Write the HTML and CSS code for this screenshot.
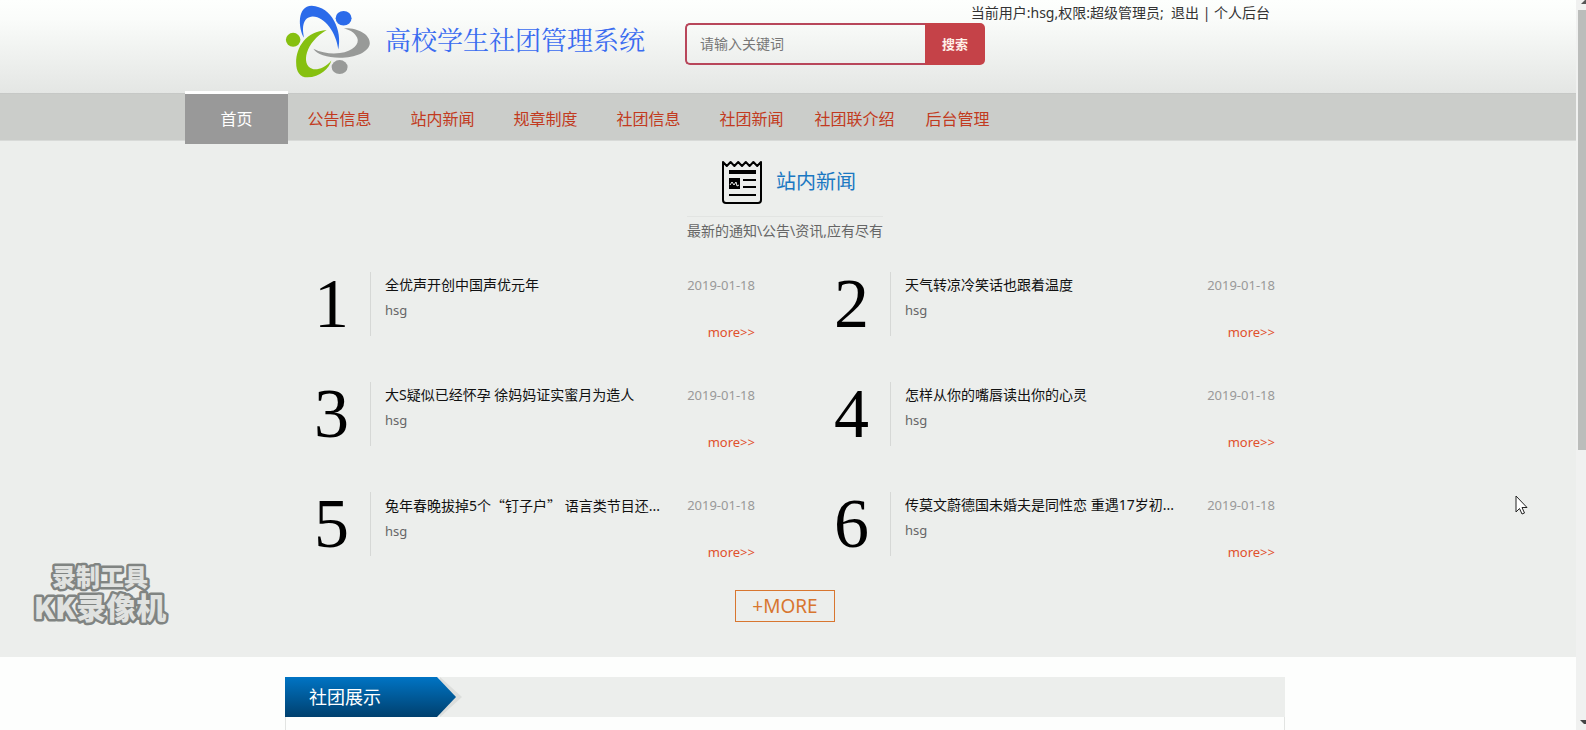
FILE: index.html
```html
<!DOCTYPE html>
<html lang="zh-CN">
<head>
<meta charset="utf-8">
<title>高校学生社团管理系统</title>
<link rel="stylesheet" href="styles.css">
</head>
<body>
<div class="page">
  <header class="header">
    <div class="wrap header-row">
      <svg class="logo" viewBox="45 10 258 226" aria-hidden="true">
        <path fill="#2b6bea" d="M102 112C84 84 80 15 125 15C186 18 218 90 205 147C200 100 165 48 128 48C98 50 95 80 102 112Z"/>
        <ellipse fill="#2b6bea" cx="221" cy="53" rx="24" ry="22"/>
        <path fill="#86c010" d="M170 88C108 92 78 140 78 186C78 215 90 231 112 231C150 230 178 204 184 180C165 203 140 210 126 205C92 192 105 125 170 88Z"/>
        <ellipse fill="#86c010" cx="69" cy="118" rx="22" ry="21"/>
        <path fill="#989a98" d="M222 83C262 81 300 100 300 128C298 155 255 172 210 172C170 171 140 162 130 145C155 158 185 161 210 158C250 153 270 130 262 112C255 95 238 88 222 83Z"/>
        <ellipse fill="#989a98" cx="209" cy="200" rx="24" ry="21"/>
      </svg>
      <h1 class="site-name">高校学生社团管理系统</h1>
      <form class="search">
        <input class="search-input" type="text" aria-label="关键词" placeholder="请输入关键词">
        <button class="search-button" type="button">搜索</button>
      </form>
      <p class="user">当前用户:hsg,权限:超级管理员;&nbsp; <a href="#">退出</a> | <a href="#">个人后台</a></p>
    </div>
  </header>
  <nav class="nav">
    <div class="nav-row">
      <a class="nav-item nav-active" href="#">首页</a>
      <a class="nav-item" href="#">公告信息</a>
      <a class="nav-item" href="#">站内新闻</a>
      <a class="nav-item" href="#">规章制度</a>
      <a class="nav-item" href="#">社团信息</a>
      <a class="nav-item" href="#">社团新闻</a>
      <a class="nav-item" href="#">社团联介绍</a>
      <a class="nav-item" href="#">后台管理</a>
    </div>
  </nav>
  <main class="main">
    <section class="news">
      <div class="news-head">
        <div class="news-title">
          <svg class="news-icon" viewBox="0 0 40 44" aria-hidden="true">
            <path fill="none" stroke="#000" stroke-width="2" stroke-linejoin="round" d="M1 2V40Q1 43 4 43H36Q39 43 39 40V2L35.200 6L31.400 2L27.600 6L23.800 2L20 6L16.200 2L12.400 6L8.600 2L4.800 6Z"/>
            <path fill="#000" d="M7 10H34V14H7ZM7 18H18V29H7Z"/>
            <path fill="none" stroke="#000" stroke-width="2" d="M21 20H34M21 27H34M7 35H34"/>
            <path fill="none" stroke="#eceeec" stroke-width="1" d="M8 25L10 22L12 25L14 22L15 26L17 25"/>
          </svg>
          <h2 class="news-name">站内新闻</h2>
        </div>
        <p class="news-sub">最新的通知\公告\资讯,应有尽有</p>
      </div>
      <div class="wrap news-grid">
        <article class="item"><span class="num">1</span><div class="text"><h3 class="title">全优声开创中国声优元年</h3><p class="author">hsg</p></div><div class="side"><time class="date">2019-01-18</time><a class="more" href="#">more&gt;&gt;</a></div></article>
        <article class="item"><span class="num">2</span><div class="text"><h3 class="title">天气转凉冷笑话也跟着温度</h3><p class="author">hsg</p></div><div class="side"><time class="date">2019-01-18</time><a class="more" href="#">more&gt;&gt;</a></div></article>
        <article class="item"><span class="num">3</span><div class="text"><h3 class="title">大S疑似已经怀孕 徐妈妈证实蜜月为造人</h3><p class="author">hsg</p></div><div class="side"><time class="date">2019-01-18</time><a class="more" href="#">more&gt;&gt;</a></div></article>
        <article class="item"><span class="num">4</span><div class="text"><h3 class="title">怎样从你的嘴唇读出你的心灵</h3><p class="author">hsg</p></div><div class="side"><time class="date">2019-01-18</time><a class="more" href="#">more&gt;&gt;</a></div></article>
        <article class="item"><span class="num">5</span><div class="text"><h3 class="title">兔年春晚拔掉5个<span class="cjk">“钉子户”</span> 语言类节目还...</h3><p class="author">hsg</p></div><div class="side"><time class="date">2019-01-18</time><a class="more" href="#">more&gt;&gt;</a></div></article>
        <article class="item"><span class="num">6</span><div class="text"><h3 class="title">传莫文蔚德国未婚夫是同性恋 重遇17岁初...</h3><p class="author">hsg</p></div><div class="side"><time class="date">2019-01-18</time><a class="more" href="#">more&gt;&gt;</a></div></article>
      </div>
      <a class="all" href="#">+MORE</a>
    </section>
    <section class="wrap show">
      <div class="show-bar">
        <svg class="show-flag" viewBox="0 0 180 40" aria-hidden="true">
          <defs><linearGradient id="flag" x1="0" y1="0" x2="0" y2="1"><stop offset="0" stop-color="#0074c4"/><stop offset="1" stop-color="#00406e"/></linearGradient></defs>
          <path fill="#dcdedc" d="M155 0L177 20L155 40Z"/>
          <path fill="url(#flag)" d="M0 0H152L171 20L152 40H0Z"/>
        </svg>
        <h2 class="show-name">社团展示</h2>
      </div>
      <div class="show-body"></div>
    </section>
  </main>
</div>
<div class="scrollbar" aria-hidden="true">
  <svg class="arrow" viewBox="0 0 10 10"><path fill="#555" d="M5 4L9 0H10V4Z"/></svg>
  <div class="track"><div class="thumb"></div></div>
  <svg class="arrow" viewBox="0 0 10 10"><path fill="#444" d="M4 0H10V4H8Z"/></svg>
</div>
<svg class="watermark" viewBox="0 0 140 84">
  <text class="mark mark-top" x="69" y="32">录制工具</text>
  <text class="mark mark-bottom" x="69" y="65">KK录像机</text>
</svg>
<svg class="cursor" viewBox="0 0 13 20" aria-hidden="true"><path fill="#fff" stroke="#222" d="M1 1V17L4.500 13.500L7 19L9.500 18L7 12.500H12Z"/></svg>
</body>
</html>
```
FILE: styles.css
```css
* { box-sizing: border-box; }

body {
  margin: 0;
  position: relative;
  display: grid;
  grid-template-columns: minmax(0, 1fr) 10px;
  min-height: 100vh;
  background: #fdfefd;
  color: #333;
  font: 14px/20px "Noto Sans", "Noto Sans CJK SC", sans-serif;
}

h1, h2, h3, p { margin: 0; font-weight: 400; }
a { color: inherit; text-decoration: none; }

.page { display: flex; flex-direction: column; }
.wrap { width: 100%; max-width: 1000px; margin: 0 auto; }
.cjk { font-family: "Noto Sans CJK SC", sans-serif; }

.header {
  padding-right: 6px;
  background: linear-gradient(#fdfffd, #fafcfa 20%, #e4e6e4);
}
.header-row {
  position: relative;
  display: flex;
  align-items: flex-start;
  height: 93px;
}
.logo { width: 86px; height: 75px; margin-top: 4px; }
.site-name {
  margin: 22px 0 0 14px;
  width: 300px;
  font: 26px/40px "Liberation Serif", "Noto Serif CJK SC", "Noto Sans CJK SC", serif;
  color: #3a6cf0;
  white-space: nowrap;
}
.search { display: flex; width: 300px; height: 42px; margin-top: 23px; }
.search-input {
  flex: 1;
  min-width: 0;
  padding: 0 13px;
  border: 2px solid #b8465a;
  border-right: 0;
  border-radius: 5px 0 0 5px;
  background: transparent;
  font: inherit;
  outline: 0;
}
.search-input::placeholder { color: #777; }
.search-button {
  width: 60px;
  padding: 0;
  border: 0;
  border-radius: 0 5px 5px 0;
  background: #c54248;
  color: #fff0e8;
  font: bold 13px/20px "Noto Sans CJK SC", sans-serif;
}
.user { position: absolute; top: 3px; right: 15px; white-space: nowrap; }

.nav { padding-right: 6px; background: #cbcdca; border-top: 1px solid #c6c8c6; border-bottom: 1px solid #d8dad8; }
.nav-row { display: flex; width: 100%; max-width: 1200px; height: 46px; margin: 0 auto; }
.nav-item { width: 103px; font-size: 16px; line-height: 50px; text-align: center; color: #c23a20; }
.nav-active {
  z-index: 1;
  position: relative;
  height: 53px;
  margin-top: -3px;
  border-top: 3px solid #fff;
  background: #999;
  color: #fff;
}

.main { flex: 1; display: flex; flex-direction: column; }
.news {
  display: flex;
  flex-direction: column;
  align-items: center;
  padding: 19px 6px 35px 0;
  background: #eceeec;
}
.news-head { text-align: center; }
.news-title {
  display: flex;
  align-items: center;
  justify-content: center;
  gap: 14px;
  height: 57px;
  padding: 0 0 12px 8px;
  border-bottom: 1px solid #e2e4e2;
}
.news-icon { width: 40px; height: 44px; }
.news-name { font-size: 20px; line-height: 30px; color: #1b78c2; }
.news-sub { margin-top: 4px; color: #666; }

.news-grid {
  display: grid;
  grid-template-columns: 1fr 1fr;
  gap: 46px 40px;
  margin-top: 31px;
}
.item { display: flex; height: 64px; padding: 0 10px 0 8px; }
.num {
  width: 78px;
  border-right: 1px solid #d6d8d6;
  font: 70px/64px "Liberation Serif", serif;
  text-align: center;
  color: #000;
}
.text { flex: 1; min-width: 0; padding: 3px 0 0 14px; }
.title { font-size: 14px; line-height: 20px; color: #111; white-space: nowrap; }
.author { margin-top: 5px; font-size: 13px; color: #666; }
.side {
  display: flex;
  flex-direction: column;
  align-items: flex-end;
  justify-content: space-between;
  height: 70px;
  padding-top: 3px;
  font-size: 13px;
}
.date { color: #999; }
.more { color: #e0502c; }
.all {
  margin-top: 34px;
  padding: 0 16px;
  border: 1px solid #d8762f;
  font-size: 19px;
  line-height: 30px;
  color: #d8762f;
}

.show { flex: 1; display: flex; flex-direction: column; padding-top: 20px; max-width: 1006px; padding-right: 6px; }
.show-bar { display: grid; height: 40px; background: #eceeec; }
.show-flag { grid-area: 1 / 1; width: 180px; height: 40px; }
.show-name { grid-area: 1 / 1; z-index: 1; padding-left: 24px; font-size: 18px; line-height: 40px; color: #fff; }
.show-body { flex: 1; border: 1px solid #e2e4e2; border-width: 0 1px; }

.scrollbar { display: flex; flex-direction: column; height: 100vh; background: #f0f1f0; }
.arrow { width: 10px; height: 10px; }
.track { flex: 1; padding-left: 2px; }
.thumb { height: 62%; background: #bbbdbb; }

.watermark { position: absolute; left: 31px; bottom: 92px; width: 140px; height: 84px; }
.mark {
  font-family: "Noto Sans CJK SC", sans-serif;
  font-weight: 900;
  text-anchor: middle;
  fill: #e0e2e0;
  stroke: #808482;
  stroke-width: 5px;
  stroke-linejoin: round;
  paint-order: stroke;
}
.mark-top { font-size: 24px; }
.mark-bottom { font-size: 30px; }
.cursor { position: absolute; right: 58px; top: 495px; width: 13px; height: 20px; }
```
